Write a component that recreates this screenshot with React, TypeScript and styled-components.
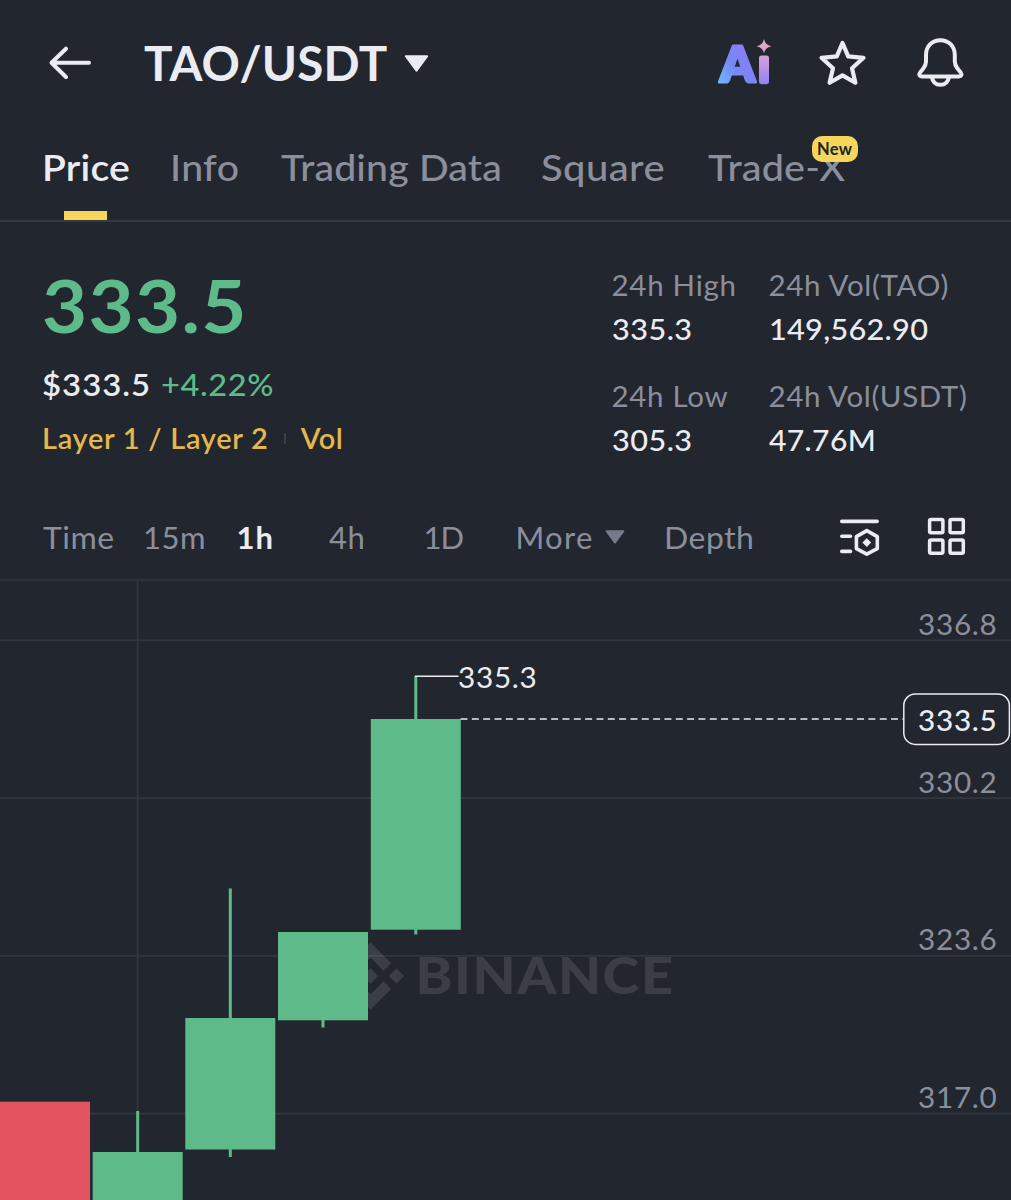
import React from 'react';
import styled, { createGlobalStyle } from 'styled-components';

const color = {
  bg: '#22262f',
  text: '#eaecf2',
  muted: '#8b8f9b',
  line: '#363a43',
  grid: '#32363f',
  green: '#5fba89',
  red: '#e15460',
  yellow: '#f5d55a',
  gold: '#e3b84c',
};

const Global = createGlobalStyle`
  html, body { margin: 0; background: ${color.bg}; }
  body { font-family: Lato, "Liberation Sans", sans-serif; color: ${color.text}; }
`;

const Screen = styled.main`
  width: 1011px;
  height: 1200px;
  overflow: hidden;
  background: ${color.bg};
  display: flex;
  flex-direction: column;
`;

const Text = styled.span<{
  $size: number;
  $weight?: number;
  $spacing?: number;
  $line?: number;
  $color?: string;
  $stretch?: number;
}>`
  display: block;
  width: max-content;
  font-size: ${(p) => p.$size}px;
  font-weight: ${(p) => p.$weight ?? 400};
  letter-spacing: ${(p) => p.$spacing ?? 0}px;
  line-height: ${(p) => p.$line ?? 40}px;
  color: ${(p) => p.$color ?? color.text};
  white-space: nowrap;
  transform: scaleX(${(p) => p.$stretch ?? 1});
  transform-origin: left center;
`;

const Header = styled.header`
  height: 126px;
  display: flex;
  align-items: center;
  padding: 0 46px 0 47px;
  box-sizing: border-box;
`;

const Pair = styled.div`
  display: flex;
  align-items: center;
  gap: 17px;
  margin-left: 51px;
`;

const Actions = styled.div`
  display: flex;
  align-items: center;
  gap: 49px;
  margin-left: auto;
`;

const Tabs = styled.nav`
  height: 96px;
  box-sizing: border-box;
  padding: 16px 0 0 42px;
  border-bottom: 2px solid ${color.line};
  display: grid;
  grid-template-columns: 127.500px 111.600px 260.400px 166.100px auto;
`;

const Tab = styled.div`
  position: relative;
  justify-self: start;
`;

const Indicator = styled.i`
  position: absolute;
  left: 22px;
  bottom: 0;
  width: 43px;
  height: 9px;
  background: ${color.yellow};
`;

const Badge = styled.span`
  position: absolute;
  left: 104px;
  top: -6.5px;
  width: 46px;
  height: 26px;
  border-radius: 10px;
  background: ${color.yellow};
  color: #20242b;
  font-size: 16.5px;
  font-weight: 700;
  letter-spacing: 0.3px;
  line-height: 26px;
  text-align: center;
`;

const Summary = styled.section`
  height: 275px;
  box-sizing: border-box;
  padding: 45px 0 0 42px;
  display: grid;
  grid-template-columns: 569.5px auto;
`;

const Quote = styled.div`
  display: flex;
  flex-direction: column;
  padding-top: 3px;
`;

const QuoteRow = styled.div<{ $top: number }>`
  display: grid;
  grid-template-columns: max-content max-content max-content;
  align-items: center;
  margin-top: ${(p) => p.$top}px;
`;

const Value = styled.div`
  width: 118.8px;
`;

const Divider = styled.i`
  width: 2px;
  height: 11px;
  margin: 0 15px;
  background: #3a3e47;
`;

const Stats = styled.div`
  display: grid;
  grid-template-columns: 157px auto;
  grid-auto-rows: 80px;
  row-gap: 31px;
`;

const Stat = styled.div`
  display: flex;
  flex-direction: column;
  gap: 8px;
`;

const Intervals = styled.div`
  height: 84px;
  box-sizing: border-box;
  padding-left: 43px;
  padding-bottom: 2px;
  border-bottom: 2px solid #2d313a;
  display: grid;
  grid-template-columns: 100px 93.5px 92.5px 94.5px 92px 148px 174.5px 88px auto;
  align-items: center;
`;

const More = styled.div`
  display: flex;
  align-items: center;
  gap: 11.5px;
`;

const Chart = styled.svg`
  display: block;
  width: 1011px;
  height: 619px;
  flex: none;
  font-family: Lato, 'Liberation Sans', sans-serif;
`;

const tabs = [
  { label: 'Price', spacing: 0.2, stretch: 1.06, active: true },
  { label: 'Info', spacing: 0.3, stretch: 1.06 },
  { label: 'Trading Data', spacing: 0.15, stretch: 1.06 },
  { label: 'Square', spacing: 0.4, stretch: 1.08 },
  { label: 'Trade-X', spacing: 0.15, stretch: 1.07, isNew: true },
];

const stats = [
  { label: '24h High', ls: 0.72, value: '335.3', vs: 0.4, stretch: 1.04 },
  { label: '24h Vol(TAO)', ls: 0.69, value: '149,562.90', vs: 0.25, stretch: 1.04 },
  { label: '24h Low', ls: 0.7, value: '305.3', vs: 0.4, stretch: 1.04 },
  { label: '24h Vol(USDT)', ls: 0.61, value: '47.76M', vs: 0.35, stretch: 1.02 },
];

const candles = [
  { x: 0, open: 1101.7, close: 1210, high: 1102, low: 1210, up: false },
  { x: 92.7, open: 1152, close: 1210, high: 1111, low: 1210, up: true },
  { x: 185.3, open: 1018, close: 1149.5, high: 888.5, low: 1157, up: true },
  { x: 278, open: 932, close: 1020.3, high: 932, low: 1027.5, up: true },
  { x: 370.8, open: 719, close: 929.7, high: 676, low: 934.5, up: true },
];

const levels = [
  { y: 640.4, label: '336.8' },
  { y: 798.2, label: '330.2' },
  { y: 955.9, label: '323.6' },
  { y: 1113.6, label: '317.0' },
];

const BackIcon = () => (
  <svg width="46" height="40" viewBox="47 43 46 40" fill="none" stroke={color.text} strokeWidth="4" strokeLinecap="round" strokeLinejoin="round">
    <path d="M66 48.7 51.5 62.8 66 77M52 62.8h37" />
  </svg>
);

const Caret = ({ width, height, fill }: { width: number; height: number; fill: string }) => (
  <svg width={width} height={height} viewBox="0 0 24 16">
    <path d="M1.8 1h20.4L12 14.8Z" fill={fill} stroke={fill} strokeWidth="2" strokeLinejoin="round" />
  </svg>
);

const AiIcon = () => (
  <svg width="60" height="52" viewBox="709 37 60 52" overflow="visible">
    <defs>
      <linearGradient id="letter" gradientUnits="userSpaceOnUse" x1="718" y1="80" x2="756" y2="56">
        <stop offset="0" stopColor="#70b4fa" />
        <stop offset="0.45" stopColor="#7688f6" />
        <stop offset="1" stopColor="#8b7cf4" />
      </linearGradient>
      <linearGradient id="stem" gradientUnits="userSpaceOnUse" x1="764" y1="39" x2="764" y2="84">
        <stop offset="0" stopColor="#e6b0b4" />
        <stop offset="0.45" stopColor="#cf9cdc" />
        <stop offset="1" stopColor="#8f84f5" />
      </linearGradient>
    </defs>
    <text x="720" y="82.300" fontWeight="800" fontSize="48.500" textLength="35" lengthAdjust="spacingAndGlyphs" fill="url(#letter)" stroke="url(#letter)" strokeWidth="3" strokeLinejoin="round">A</text>
    <rect x="759" y="55.5" width="10" height="28.7" rx="2.4" fill="url(#stem)" />
    <path d="M764 39c1.2 4.4 2.8 6 7.4 7.2-4.6 1.2-6.2 2.8-7.4 7.2-1.2-4.4-2.8-6-7.4-7.2 4.6-1.2 6.2-2.8 7.4-7.2Z" fill="url(#stem)" />
  </svg>
);

const StarIcon = () => (
  <svg width="49" height="50" viewBox="818 38 49 50" fill="none" stroke={color.text} strokeWidth="4.2" strokeLinejoin="round">
    <path d="M842.5 43 848.2 56.4 863.5 57.8 852 68.2 855.4 82.8 842.5 75.4 829.6 82.8 833 68.2 821.5 57.8 836.8 56.4Z" />
  </svg>
);

const BellIcon = () => (
  <svg width="49" height="52" viewBox="916 37 49 52" fill="none" stroke={color.text} strokeWidth="4" strokeLinejoin="round">
    <path d="M940.4 40.2c-8.600 0-14.400 6.200-14.400 14.600v6.700c0 3-.8 4.700-2.700 7l-3 3.700c-1.800 2.600-.9 4.400 1.600 4.400h37c2.500 0 3.400-1.800 1.600-4.400l-3-3.700c-1.900-2.300-2.700-4-2.700-7v-6.700c0-8.400-5.800-14.600-14.400-14.600Z" />
    <path d="M931.800 77c.8 5 4 7.800 8.600 7.800s7.800-2.800 8.600-7.800" />
  </svg>
);

const SettingsIcon = () => (
  <svg width="43" height="42" viewBox="838 516 43 42" fill="none" stroke={color.text} strokeWidth="3.6" strokeLinecap="round" strokeLinejoin="round">
    <path d="M841.8 521.4h35.300M841.800 536.300h8.700M841.800 551.400h8.700" />
    <path d="M866.800 530.600 877.300 536.600V548.600L866.800 554.200 856.400 548.600V536.600Z" />
    <path d="M866.800 538.200 871.200 542.600 866.800 547 862.400 542.600Z" fill={color.text} stroke="none" />
  </svg>
);

const GridIcon = () => (
  <svg width="42" height="42" viewBox="926 516 42 42" fill="none" stroke={color.text} strokeWidth="3.500">
    {[929.6, 950].map((x) =>
      [519.5, 540].map((y) => <rect key={`${x}-${y}`} x={x} y={y} width="13.300" height="13.300" rx="1.500" />),
    )}
  </svg>
);

const Watermark = () => (
  <g fill="#ffffff" opacity="0.11">
    <g transform="translate(337.1 942.6) scale(.528)">
      <path d="M38.730 53.200 63.300 28.630 87.880 53.210 102.180 38.910 63.300 0 24.430 38.900Z" />
      <path d="M0 63.310 14.300 49 28.610 63.310 14.300 77.610Z" />
      <path d="M38.730 73.410 63.300 97.990 87.880 73.400 102.190 87.690 63.300 126.610 24.420 87.720Z" />
      <path d="M98 63.300 112.300 49 126.610 63.300 112.300 77.600Z" />
      <path d="M77.830 63.300 63.300 48.780 48.780 63.300 63.300 77.830Z" />
    </g>
    <text x="415.500" y="994.300" fontSize="51.500" fontWeight="900" letterSpacing="1.500" textLength="259" lengthAdjust="spacingAndGlyphs">BINANCE</text>
  </g>
);

const PriceChart = () => (
  <Chart viewBox="0 581 1011 619">
    <g stroke={color.grid} strokeWidth="1.700">
      <path d="M137.600 581V1200" />
      {levels.map((l) => <path key={l.label} d={`M0 ${l.y}H1011`} />)}
    </g>
    <Watermark />
    {candles.map((c) => {
      const fill = c.up ? color.green : color.red;
      return (
        <g key={c.x} fill={fill}>
          <rect x={c.x + 43.5} y={c.high} width="3" height={c.low - c.high} />
          <rect x={c.x} y={c.open} width="90" height={c.close - c.open} />
        </g>
      );
    })}
    <path d="M415 676.200H458.500" stroke={color.text} strokeWidth="1.600" />
    <path d="M460.500 719H903" stroke={color.text} strokeWidth="1.600" strokeDasharray="7 4.330" />
    <rect x="903.800" y="694" width="105.600" height="50.400" rx="11.500" fill={color.bg} stroke={color.text} strokeWidth="1.500" />
    <g fontSize="28.500" letterSpacing="0.700">
      {levels.map((l) => (
        <text key={l.label} x="918" y={l.y - 5.5} fill={color.muted} textLength="79.500" lengthAdjust="spacingAndGlyphs">{l.label}</text>
      ))}
      <text x="918" y="730.500" fill={color.text} fontWeight="500" textLength="79.500" lengthAdjust="spacingAndGlyphs">333.5</text>
      <text x="458" y="687.600" fill={color.text} textLength="79.500" lengthAdjust="spacingAndGlyphs">335.3</text>
    </g>
  </Chart>
);

export default function App() {
  return (
    <Screen>
      <Global />
      <Header>
        <BackIcon />
        <Pair>
          <Text $size={47.5} $weight={700} $spacing={0.23} $line={62}>TAO/USDT</Text>
          <Caret width={25} height={17} fill={color.text} />
        </Pair>
        <Actions>
          <AiIcon />
          <StarIcon />
          <BellIcon />
        </Actions>
      </Header>
      <Tabs>
        {tabs.map((t) => (
          <Tab key={t.label}>
            <Text $size={37} $weight={t.active ? 600 : 500} $spacing={t.spacing} $stretch={t.stretch} $line={50} $color={t.active ? color.text : color.muted}>{t.label}</Text>
            {t.active && <Indicator />}
            {t.isNew && <Badge>New</Badge>}
          </Tab>
        ))}
      </Tabs>
      <Summary>
        <Quote>
          <Text $size={73.5} $weight={700} $spacing={1.2} $stretch={1.06} $line={70} $color={color.green}>333.5</Text>
          <QuoteRow $top={23.5}>
            <Value>
              <Text $size={31} $weight={600} $spacing={0.95} $stretch={1.06}>$333.5</Text>
            </Value>
            <Text $size={31} $weight={500} $spacing={0.6} $stretch={1.05} $color={color.green}>+4.22%</Text>
          </QuoteRow>
          <QuoteRow $top={14.5}>
            <Text $size={29} $weight={600} $spacing={0.71} $color={color.gold}>Layer 1 / Layer 2</Text>
            <Divider />
            <Text $size={29} $weight={600} $spacing={0.5} $color={color.gold}>Vol</Text>
          </QuoteRow>
        </Quote>
        <Stats>
          {stats.map((s) => (
            <Stat key={s.label}>
              <Text $size={29.5} $spacing={s.ls} $line={36} $color={color.muted}>{s.label}</Text>
              <Text $size={29.5} $weight={500} $spacing={s.vs} $stretch={s.stretch} $line={36}>{s.value}</Text>
            </Stat>
          ))}
        </Stats>
      </Summary>
      <Intervals>
        <Text $size={31} $spacing={0.5} $stretch={1.03} $color={color.muted}>Time</Text>
        <Text $size={31} $spacing={0.52} $color={color.muted}>15m</Text>
        <Text $size={31} $weight={700} $spacing={1}>1h</Text>
        <Text $size={31} $spacing={0.5} $color={color.muted}>4h</Text>
        <Text $size={31} $spacing={-1} $color={color.muted}>1D</Text>
        <More>
          <Text $size={31} $spacing={1.32} $color={color.muted}>More</Text>
          <Caret width={20} height={14} fill="#757c89" />
        </More>
        <Text $size={31} $spacing={0.5} $stretch={1.03} $color={color.muted}>Depth</Text>
        <SettingsIcon />
        <GridIcon />
      </Intervals>
      <PriceChart />
    </Screen>
  );
}
